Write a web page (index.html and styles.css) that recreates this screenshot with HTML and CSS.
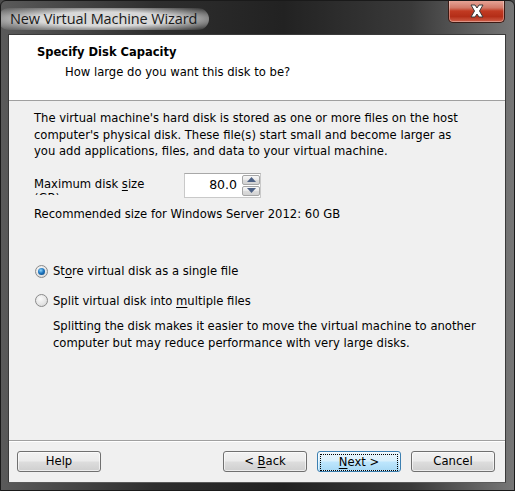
FILE: index.html
```html
<!DOCTYPE html>
<html>
<head>
<meta charset="utf-8">
<link rel="stylesheet" href="styles.css">
</head>
<body>
<div class="window">
  <div class="titlebar">
    <span class="title">New Virtual Machine Wizard</span>
    <div class="close">
      <svg width="20" height="14" viewBox="0 0 20 14">
        <path d="M4 1 L8 1 L10 4 L12 1 L16 1 L12.5 7 L16 13 L12 13 L10 10 L8 13 L4 13 L7.5 7 Z" fill="#fff" stroke="#3a3a3a" stroke-width="1" stroke-linejoin="round"/>
      </svg>
    </div>
  </div>
  <div class="client">
    <div class="header">
      <div class="h-title">Specify Disk Capacity</div>
      <div class="h-sub">How large do you want this disk to be?</div>
    </div>
    <div class="body">
      <p class="para">The virtual machine's hard disk is stored as one or more files on the host computer's physical disk. These file(s) start small and become larger as you add applications, files, and data to your virtual machine.</p>
      <div class="size-row">
        <div class="size-label">Maximum disk <u>s</u>ize<br>(GB):</div>
        <div class="spin">
          <div class="spin-field">80.0</div>
          <div class="spin-btns">
            <div class="spin-btn"><svg width="9" height="5" viewBox="0 0 9 5"><path d="M0 5 L4.5 0 L9 5 Z" fill="#4d6185"/></svg></div>
            <div class="spin-btn"><svg width="9" height="5" viewBox="0 0 9 5"><path d="M0 0 L4.5 5 L9 0 Z" fill="#4d6185"/></svg></div>
          </div>
        </div>
      </div>
      <div class="recommend">Recommended size for Windows Server 2012: 60 GB</div>
      <div class="radio-row first"><span class="radio checked"></span><span>St<u>o</u>re virtual disk as a single file</span></div>
      <div class="radio-row"><span class="radio"></span><span>Split virtual disk into <u>m</u>ultiple files</span></div>
      <p class="desc">Splitting the disk makes it easier to move the virtual machine to another computer but may reduce performance with very large disks.</p>
    </div>
    <div class="footer">
      <div class="btn">Help</div>
      <div class="spacer"></div>
      <div class="btn">&lt; <u>B</u>ack</div>
      <div class="btn default"><span class="focus"><u>N</u>ext &gt;</span></div>
      <div class="btn">Cancel</div>
    </div>
  </div>
</div>
</body>
</html>
```
FILE: styles.css
```css
html, body {
  margin: 0;
  padding: 0;
  background: #4a4a4a;
}
.window {
  width: 515px;
  height: 491px;
  box-sizing: border-box;
  background: linear-gradient(90deg, #5a5a5a 0%, #2e2e2e 30%, #222 55%, #3a3a3a 80%, #777 100%);
  border: 1px solid #1a1a1a;
  border-radius: 6px 6px 0 0;
  display: flex;
  flex-direction: column;
  padding: 0 8px 0 7px;
  font-family: "DejaVu Sans", sans-serif;
  overflow: hidden;
}
.titlebar {
  height: 33px;
  flex: none;
  display: flex;
  align-items: flex-start;
  justify-content: space-between;
}
.title {
  margin-top: 7px;
  margin-left: -10px;
  font-family: "Open Sans", "Noto Sans", sans-serif;
  font-size: 14.5px;
  line-height: 22px;
  color: #1a1a1a;
  padding: 0 12px;
  border-radius: 14px;
  background: radial-gradient(ellipse at center, rgba(225,225,225,0.95) 45%, rgba(190,190,190,0.6) 72%, rgba(150,150,150,0) 100%);
  letter-spacing: -0.1px;
}
.close {
  width: 57px;
  height: 23px;
  margin-top: -1px;
  margin-right: 1px;
  box-sizing: border-box;
  border: 1px solid #3b1a14;
  border-top: none;
  border-radius: 0 0 5px 5px;
  background: linear-gradient(180deg, #e9a99c 0%, #d27a69 35%, #c13a22 50%, #b42e18 75%, #d0604a 100%);
  box-shadow: inset 0 0 0 1px rgba(255,255,255,0.35);
  display: flex;
  align-items: center;
  justify-content: center;
}
.client {
  height: 449px;
  flex: none;
  box-sizing: border-box;
  background: #f0f0f0;
  display: flex;
  flex-direction: column;
  border: 1px solid #3a3a3a;
  border-bottom-color: #5a5a5a;
}
.header {
  background: #fff;
  height: 66px;
  flex: none;
  border-bottom: 1px solid #a0a0a0;
  box-sizing: border-box;
  padding-top: 10px;
  font-size: 11.6px;
  color: #000;
}
.h-title {
  font-weight: bold;
  margin-left: 28px;
  font-size: 11.5px;
  line-height: 15px;
}
.h-sub {
  margin-left: 56px;
  margin-top: 5px;
  line-height: 15px;
}
.body {
  flex: 1;
  padding: 9px 10px 0 25px;
  font-size: 11.6px;
  color: #000;
  line-height: 16.5px;
}
.para {
  margin: 0;
  width: 432px;
}
.size-row {
  display: flex;
  align-items: flex-start;
  margin-top: 13px;
  height: 25px;
}
.size-label {
  width: 150px;
  height: 18px;
  overflow: hidden;
  margin-top: 4px;
  line-height: 14px;
}
.spin {
  display: flex;
  height: 25px;
  border: 1px solid #c9c9c9;
  border-top-color: #a8a8a8;
  box-sizing: border-box;
  background: #fff;
}
.spin-field {
  width: 52px;
  text-align: right;
  padding-right: 5px;
  line-height: 22px;
  font-size: 12.5px;
}
.spin-btns {
  width: 18px;
  display: flex;
  flex-direction: column;
  padding: 1px 0 1px 0;
  gap: 1px;
}
.spin-btn {
  flex: 1;
  border: 1px solid #a6a6a6;
  border-radius: 2px;
  background: linear-gradient(180deg, #f7f7f7 0%, #e8e8e8 50%, #dcdcdc 51%, #d2d2d2 100%);
  display: flex;
  align-items: center;
  justify-content: center;
}
.recommend {
  margin-top: 8px;
}
.radio-row {
  display: flex;
  align-items: center;
  gap: 5px;
  margin-top: 13px;
  margin-left: 1px;
}
.radio-row.first {
  margin-top: 41px;
}
.radio {
  width: 13px;
  height: 13px;
  box-sizing: border-box;
  border-radius: 50%;
  border: 1px solid #8a8a8a;
  background: radial-gradient(circle at 40% 35%, #fafafa 0%, #e6e6e6 55%, #cfcfcf 100%);
  flex: none;
  position: relative;
}
.radio.checked::after {
  content: "";
  position: absolute;
  left: 2px;
  top: 2px;
  width: 7px;
  height: 7px;
  border-radius: 50%;
  background: radial-gradient(circle at 40% 35%, #8fd6fb 0%, #1f76c0 45%, #0a3f73 100%);
}
.desc {
  margin: 9px 0 0 19px;
  width: 430px;
}
.footer {
  flex: none;
  height: 42px;
  box-sizing: border-box;
  border-top: 1px solid #a0a0a0;
  box-shadow: inset 0 1px 0 #fff;
  display: flex;
  align-items: flex-start;
  padding: 10px 10px 0 8px;
  gap: 10px;
}
.spacer {
  flex: 1;
}
.btn {
  width: 84px;
  height: 21px;
  box-sizing: border-box;
  border: 1px solid #707070;
  border-radius: 3px;
  background: linear-gradient(180deg, #f2f2f2 0%, #ebebeb 48%, #dddddd 52%, #cfcfcf 100%);
  box-shadow: inset 0 0 0 1px rgba(255,255,255,0.6);
  font-size: 11.6px;
  line-height: 19px;
  text-align: center;
  color: #000;
}
.btn.default {
  border-color: #3c7fb1;
  background: linear-gradient(180deg, #eaf6fd 0%, #d9f0fc 48%, #bee6fd 52%, #a7d9f5 100%);
  padding: 2px;
}
.focus {
  display: block;
  height: 15px;
  line-height: 15px;
  border: 1px dotted #000;
}
u {
  text-decoration: underline;
  text-underline-offset: 2px;
}
```
